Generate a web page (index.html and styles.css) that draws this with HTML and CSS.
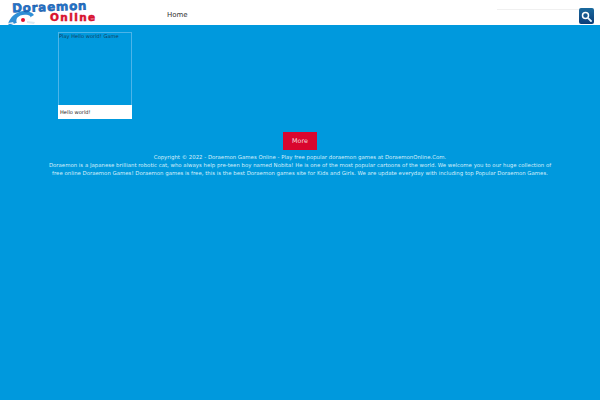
FILE: index.html
```html
<!DOCTYPE html>
<html lang="en">
<head>
<meta charset="utf-8">
<title>Doraemon Games Online</title>
<link rel="stylesheet" href="styles.css">
</head>
<body>
<header class="top">
  <a class="logo" href="#">
    <svg class="logo-head" width="30" height="16" viewBox="0 0 30 16" aria-hidden="true">
      <path d="M1 15C3 8 9 3 16 2c5 0 9 1 11 4l-5 3-4 3-9 2-5 2H2z" fill="#2f8fd6"/>
      <path d="M10 9c2-3 7-4 11-3 3 1 3 2 1 4l-5 3-6 2c-2-1-2-4-1-6z" fill="#fff"/>
      <circle cx="16" cy="11" r="2" fill="#e0102f"/>
      <path d="M20 12l8 1-1 2-7-1zM1 14l5-1 1 2H1z" fill="#dbe9f2"/>
    </svg>
    <span class="logo-name">Doraemon</span>
    <span class="logo-online">Online</span>
  </a>
  <nav class="nav"><a href="#">Home</a></nav>
  <form class="search">
    <input class="search-input" type="text" aria-label="Search">
    <button class="search-btn" type="button" aria-label="Search">
      <svg width="11" height="11" viewBox="0 0 11 11" aria-hidden="true">
        <circle cx="4.5" cy="4.5" r="3" fill="none" stroke="#fff" stroke-width="1.5"/>
        <path d="M6.8 6.8L10 10" stroke="#dfeefa" stroke-width="1.8" stroke-linecap="round"/>
      </svg>
    </button>
  </form>
</header>
<main class="main">
  <section class="grid">
    <a class="card" href="#">
      <div class="thumb">Play Hello world! Game</div>
      <div class="caption">Hello world!</div>
    </a>
  </section>
  <div class="more-row"><a class="more" href="#">More</a></div>
  <footer class="foot">
    <p>Copyright © 2022 - Doraemon Games Online - Play free popular doraemon games at DoraemonOnline.Com.</p>
    <p>Doraemon is a Japanese brilliant robotic cat, who always help pre-teen boy named Nobita! He is one of the most popular cartoons of the world. We welcome you to our huge collection of free online Doraemon Games! Doraemon games is free, this is the best Doraemon games site for Kids and Girls. We are update everyday with including top Popular Doraemon Games.</p>
  </footer>
</main>
</body>
</html>
```
FILE: styles.css
```css
* { box-sizing: border-box; }
html, body { margin: 0; height: 100%; }
body {
  background: #0099dd;
  font-family: "DejaVu Sans", sans-serif;
  overflow: hidden;
}
a { text-decoration: none; color: inherit; }
p { margin: 0; }

.top {
  height: 25px;
  background: #fff;
  display: flex;
  align-items: flex-start;
}
.logo {
  position: relative;
  display: block;
  width: 167px;
  height: 25px;
  flex: none;
}
.logo-head { position: absolute; left: 7px; top: 9px; }
.logo-name {
  position: absolute;
  left: 12px;
  top: 2px;
  font: 700 12px/11px "DejaVu Sans", sans-serif;
  letter-spacing: 0.7px;
  color: #1f78d0;
  -webkit-text-stroke: 0.5px #174f9c;
  transform: rotate(-2deg);
}
.logo-online {
  position: absolute;
  left: 50px;
  top: 12px;
  font: 700 10.5px/10px "DejaVu Sans", sans-serif;
  letter-spacing: 1.4px;
  color: #d8102f;
  -webkit-text-stroke: 0.5px #d8102f;
}
.nav {
  flex: 1;
  font-size: 7px;
  line-height: 10px;
  padding-top: 10px;
  color: #333;
}
.search {
  display: flex;
  align-items: flex-start;
  margin: 8px 6px 0 0;
}
.search-input {
  width: 82px;
  height: 15px;
  padding: 0;
  border: 0;
  border-top: 1px solid #f0f0f0;
  background: #fff;
  margin-top: 1px;
}
.search-btn {
  width: 15px;
  height: 16px;
  padding: 0;
  border: 0;
  border-radius: 2px;
  background: linear-gradient(#1a6a9e, #0c3c78);
  display: flex;
  align-items: center;
  justify-content: center;
}

.main { padding: 7px 48px 0; }
.grid { display: flex; padding-left: 10px; }
.card {
  width: 74px;
  height: 87px;
  border: 1px solid #4db4e8;
  display: flex;
  flex-direction: column;
  font-size: 5.1px;
  color: #14405e;
}
.thumb { flex: 1; line-height: 7px; }
.caption {
  height: 14px;
  margin: 0 -1px -1px;
  background: #fff;
  color: #222;
  line-height: 14px;
  padding-left: 2px;
}
.more-row {
  display: flex;
  justify-content: center;
  margin-top: 13px;
}
.more {
  width: 34px;
  height: 18px;
  background: #d9062e;
  color: #f4d8dc;
  font-size: 6.4px;
  line-height: 18px;
  text-align: center;
}
.foot {
  margin-top: 3px;
  text-align: center;
  color: #d4eefb;
  font-size: 5.4px;
  line-height: 8px;
}
```
